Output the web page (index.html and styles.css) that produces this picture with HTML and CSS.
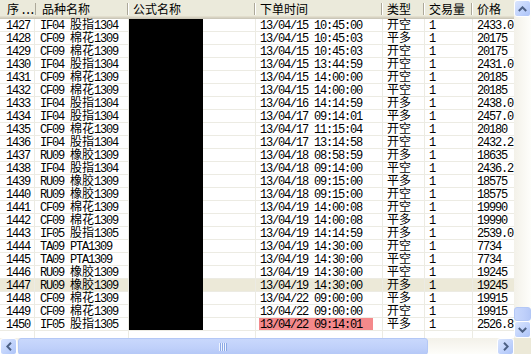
FILE: index.html
```html
<!DOCTYPE html>
<html>
<head>
<meta charset="utf-8">
<link rel="stylesheet" href="styles.css">
</head>
<body>
<div class="lv">
  <div class="view">
    <div class="hdr">
      <div class="hc c1"><span class="cn">序</span><span class="dots">...</span></div>
      <div class="hc c2"><span class="cn">品种名称</span></div>
      <div class="hc c3"><span class="cn">公式名称</span></div>
      <div class="hc c4"><span class="cn">下单时间</span></div>
      <div class="hc c5"><span class="cn">类型</span></div>
      <div class="hc c6"><span class="cn">交易量</span></div>
      <div class="hc c7"><span class="cn">价格</span></div>
    </div>
    <div class="body" id="body"></div>
    <div class="redact"></div>
  </div>
  <div class="vscroll">
    <div class="sbtn up"><svg width="9" height="6" viewBox="0 0 9 6"><path d="M0.8 5 L4.5 1.3 L8.2 5" fill="none" stroke="#4d6185" stroke-width="2"/></svg></div>
    <div class="vtrack"><div class="vthumb"></div></div>
    <div class="sbtn dn"><svg width="9" height="6" viewBox="0 0 9 6"><path d="M0.8 1 L4.5 4.7 L8.2 1" fill="none" stroke="#4d6185" stroke-width="2"/></svg></div>
  </div>
  <div class="hscroll">
    <div class="sbtn lt"><svg width="6" height="9" viewBox="0 0 6 9"><path d="M5 0.8 L1.3 4.5 L5 8.2" fill="none" stroke="#4d6185" stroke-width="2"/></svg></div>
    <div class="htrack"><div class="hthumb"><span class="grip"></span></div></div>
    <div class="sbtn rt"><svg width="6" height="9" viewBox="0 0 6 9"><path d="M1 0.8 L4.7 4.5 L1 8.2" fill="none" stroke="#4d6185" stroke-width="2"/></svg></div>
  </div>
  <div class="corner"></div>
</div>
<script>
var d = [
["1427","IF04","股指","1304","13/04/15 10:45:00","开空","2433.0"],
["1428","CF09","棉花","1309","13/04/15 10:45:03","平多","20175"],
["1429","CF09","棉花","1309","13/04/15 10:45:03","开空","20175"],
["1430","IF04","股指","1304","13/04/15 13:44:59","开空","2431.0"],
["1431","CF09","棉花","1309","13/04/15 14:00:00","开空","20185"],
["1432","CF09","棉花","1309","13/04/15 14:00:00","平空","20185"],
["1433","IF04","股指","1304","13/04/16 14:14:59","开多","2438.0"],
["1434","IF04","股指","1304","13/04/17 09:14:01","平多","2457.0"],
["1435","CF09","棉花","1309","13/04/17 11:15:04","开空","20180"],
["1436","IF04","股指","1304","13/04/17 13:14:58","开空","2432.2"],
["1437","RU09","橡胶","1309","13/04/18 08:58:59","开多","18635"],
["1438","IF04","股指","1304","13/04/18 09:14:00","平空","2436.2"],
["1439","RU09","橡胶","1309","13/04/18 09:15:00","平多","18575"],
["1440","RU09","橡胶","1309","13/04/18 09:15:00","开空","18575"],
["1441","CF09","棉花","1309","13/04/19 14:00:08","开空","19990"],
["1442","CF09","棉花","1309","13/04/19 14:00:08","平多","19990"],
["1443","IF05","股指","1305","13/04/19 14:14:59","开多","2539.0"],
["1444","TA09","PTA","1309","13/04/19 14:30:00","开空","7734"],
["1445","TA09","PTA","1309","13/04/19 14:30:00","平空","7734"],
["1446","RU09","橡胶","1309","13/04/19 14:30:00","平空","19245"],
["1447","RU09","橡胶","1309","13/04/19 14:30:00","开多","19245"],
["1448","CF09","棉花","1309","13/04/22 09:00:00","平多","19915"],
["1449","CF09","棉花","1309","13/04/22 09:00:00","开空","19915"],
["1450","IF05","股指","1305","13/04/22 09:14:01","平多","2526.8"]
];
var h = "";
d.forEach(function(r, i){
  var name = r[2] === "PTA" ? "PTA" : '<span class="cn">' + r[2] + '</span>';
  var time = i === 23 ? '<span class="red">' + r[4] + '</span>' : r[4];
  h += '<div class="row' + (i === 20 ? ' sel' : '') + '">' +
    '<div class="cell c1">' + r[0] + '</div>' +
    '<div class="cell c2">' + r[1] + ' ' + name + r[3] + '</div>' +
    '<div class="cell c3"></div>' +
    '<div class="cell c4">' + time + '</div>' +
    '<div class="cell c5"><span class="cn">' + r[5] + '</span></div>' +
    '<div class="cell c6">1</div>' +
    '<div class="cell c7">' + r[6] + '</div>' +
    '</div>';
});
h += '<div class="row blank"><div class="cell c1"></div><div class="cell c2"></div><div class="cell c3"></div><div class="cell c4"></div><div class="cell c5"></div><div class="cell c6"></div><div class="cell c7"></div></div>';
document.getElementById("body").innerHTML = h;
</script>
</body>
</html>
```
FILE: styles.css
```css
html, body { margin: 0; padding: 0; background: #fff; }
body { font-family: "Liberation Mono", "DejaVu Sans Mono", monospace; color: #000; }
.cn { font-family: "Noto Sans CJK SC", sans-serif; font-size: 12px; letter-spacing: 0; line-height: 0; }
.lv {
  display: grid;
  grid-template-columns: 514px 17px;
  grid-template-rows: 338px 17px;
  width: 531px;
  height: 355px;
  overflow: hidden;
}
.view { position: relative; overflow: hidden; background: #fff; }
.hdr {
  display: flex;
  height: 19px;
  background: #ebeadb;
  box-shadow: inset 0 -1px #cbc7b8, inset 0 -2px #d6d2c2, inset 0 -3px #e2decd;
}
.hc {
  box-sizing: border-box;
  flex: none;
  height: 19px;
  padding-left: 4px;
  padding-top: 4px;
  line-height: 14px;
  font-size: 12px;
  white-space: nowrap;
  background:
    linear-gradient(#aca899, #aca899) right 1px top 3px / 1px 12px no-repeat,
    linear-gradient(#fff, #fff) right 0 top 3px / 1px 12px no-repeat;
}
.dots { letter-spacing: -2.8px; margin-left: 1px; }
.c1 { width: 36px; }
.c2 { width: 93px; }
.c3 { width: 127px; }
.c4 { width: 127px; }
.c5 { width: 42px; }
.c6 { width: 48px; }
.c7 { width: 42px; }
.hc.c1 { padding-left: 7px; background-position: right 0 top 3px, right -1px top 3px; }
.hc.c2 { padding-left: 6px; }
.hc.c7 { background: none; }
.row { display: flex; height: 13px; }
.cell {
  box-sizing: border-box;
  flex: none;
  height: 13px;
  padding-left: 4px;
  padding-top: 1px;
  border-right: 1px solid #ecebe3;
  border-bottom: 1px solid #ecebe3;
  font-size: 12px;
  letter-spacing: -1.2px;
  line-height: 13px;
  white-space: nowrap;
}
.cell.c1 { width: 35px; padding-left: 6px; }
.cell.c2 { width: 94px; padding-left: 5px; }
.cell.c7 { border-right: none; }
.row.sel { background: #ece9d8; }
.row.blank .cell { border-bottom: none; height: 7px; }
.red {
  display: inline-block;
  background: #f4898b;
  margin-left: -1px;
  padding-left: 1px;
  width: 114px;
  box-sizing: border-box;
  margin-top: -1px;
  padding-top: 1px;
  height: 12px;
  vertical-align: top;
}
.redact { position: absolute; left: 129px; top: 19px; width: 74px; height: 311px; background: #000; }

.vscroll {
  display: flex;
  flex-direction: column;
  background: linear-gradient(90deg, #f3f1e9, #fefefb);
}
.vtrack { flex: 1; position: relative; }
.vthumb {
  position: absolute; left: 0; right: 0; top: 290px; height: 14px;
  box-sizing: border-box;
  border: 1px solid #b4c8f6; border-radius: 3px;
  background: linear-gradient(90deg, #c9d8fc, #bfd0fa 60%, #b5c8f7);
}
.sbtn {
  box-sizing: border-box;
  width: 17px; height: 17px;
  border: 1px solid #fff;
  border-radius: 3px;
  background: linear-gradient(135deg, #dbe6fe, #bacefb 70%, #aec4f7);
  display: flex; align-items: center; justify-content: center;
  flex: none;
}
.hscroll {
  display: flex;
  background: linear-gradient(#f3f1e9, #fefefb);
}
.htrack { flex: 1; position: relative; }
.hthumb {
  position: absolute; top: 0; bottom: 0; left: 1px; width: 410px;
  box-sizing: border-box;
  border: 1px solid #b4c8f6; border-radius: 3px;
  background: linear-gradient(#c9d8fc, #bfd0fa 60%, #b5c8f7);
  display: flex; align-items: center; justify-content: center;
}
.grip {
  width: 8px; height: 8px;
  background: repeating-linear-gradient(90deg, #eef4fe 0 1px, #8ca8e6 1px 2px);
}
.corner { background: #ece9d8; }
```
